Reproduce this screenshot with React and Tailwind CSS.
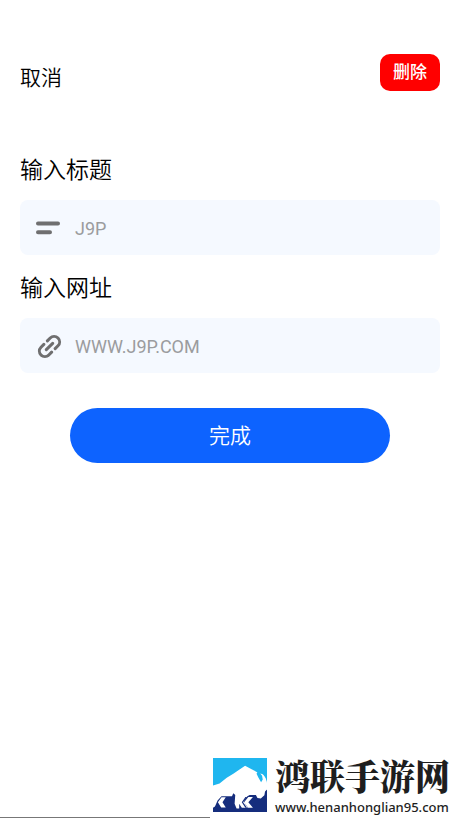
import React, { useState } from "react";

const fields = [
    { id: "title", label: "输入标题", placeholder: "J9P", icon: "lines" },
    { id: "url", label: "输入网址", placeholder: "WWW.J9P.COM", icon: "link" },
];

const LinesIcon = () => (
    <svg viewBox="0 0 28 28" className="h-7 w-7 shrink-0" fill="none" stroke="#6f6f70" strokeWidth="4" strokeLinecap="round" aria-hidden="true">
        <path d="M4 9.5h20M4 18.3h12" />
    </svg>
);

const LinkIcon = () => (
    <svg viewBox="0 0 28 28" className="h-7 w-7 shrink-0" fill="none" stroke="#6f6f70" strokeWidth="3" strokeLinecap="round" strokeLinejoin="round" aria-hidden="true">
        <g transform="translate(15.5 14.5) rotate(-45)">
            <path d="M-2.5-5.5h-4a5.5 5.5 0 0 0 0 11h4M2.5-5.5h4a5.5 5.5 0 0 1 0 11h-4M-4.5 0h9" />
        </g>
    </svg>
);

const BisonLogo = () => (
    <svg viewBox="0 0 165 165" className="mb-[3px] h-[54px] w-[54px] shrink-0" aria-hidden="true">
        <path fill="#1fb6ef" d="M0 0h165v100H0z" />
        <path fill="#152d7d" d="M0 96h165v69H0z" />
        <path fill="#fff" d="M0 84 20 78 42 60 62 48 98 24 118 34 136 44 152 50 162 60 165 76 165 96 159 102 157 114 146 124 136 122 131 113 112 113 104 118 94 132 106 152 88 152 80 140 80 154 72 154 66 140 68 113 62 108 58 117 26 117 14 130 6 148 0 152z" />
        <path fill="#1fb6ef" d="m142 26-4 14-5 8 6 12 8 14 5-8-2-12-5-6 4-10zM154 48l11 22V44z" />
        <path fill="#fff" d="M26 120h13L29 135l10 16H25l-10-16zM108 119h14l-14 16 14 17h-15l-12-17z" />
        <path fill="#152d7d" d="m104 119-12 16 12 17h-5l-11-17 11-16z" />
    </svg>
);

const App = () => {
    const [values, setValues] = useState({ title: "", url: "" });

    return (
        <div className="flex min-h-screen flex-col bg-white font-['Roboto','Noto_Sans_CJK_SC',sans-serif] text-black">
            <header className="flex items-end justify-between px-5 pt-[54px]">
                <button type="button" className="text-[21px] leading-[26px] font-[350]">取消</button>
                <button type="button" className="h-[37px] rounded-[10px] bg-[#ff0000] px-[13px] text-[17px] font-medium text-white">删除</button>
            </header>

            <form className="mt-16 px-5" onSubmit={(e) => e.preventDefault()}>
                {fields.map((field) => (
                    <div key={field.id} className="mb-[18px]">
                        <label htmlFor={field.id} className="block text-[23px] leading-8 font-[350]">{field.label}</label>
                        <div className="mt-[13px] flex h-[55px] items-center gap-[13px] rounded-lg bg-[#f5f9ff] px-[14px]">
                            {field.icon === "lines" ? <LinesIcon /> : <LinkIcon />}
                            <input
                                id={field.id}
                                type="text"
                                value={values[field.id]}
                                onChange={(e) => setValues({ ...values, [field.id]: e.target.value })}
                                placeholder={field.placeholder}
                                className="h-full min-w-0 flex-1 bg-transparent pt-[2px] text-[18px] outline-none placeholder:text-[#9b9c9e]"
                            />
                        </div>
                    </div>
                ))}

                <div className="mt-[35px] px-[50px]">
                    <button type="submit" className="h-[55px] w-full rounded-full bg-[#0d63ff] pt-[2px] text-[21px] font-[350] text-white">完成</button>
                </div>
            </form>

            <footer className="mt-auto flex items-end">
                <div className="flex-1 border-b border-[#777777]" />
                <div className="flex items-end gap-2 pr-[10px] pb-[3px] pl-[3px]">
                    <BisonLogo />
                    <div>
                        <p className="font-['Liberation_Serif','Noto_Serif_CJK_SC','Noto_Sans_CJK_SC',serif] text-[35px] leading-10 font-black text-[#1e1e1e]">鸿联手游网</p>
                        <p className="font-['Noto_Sans',sans-serif] text-[13px] leading-4 font-medium text-[#1e1e1e]">www.henanhonglian95.com</p>
                    </div>
                </div>
            </footer>
        </div>
    );
};

export default App;
